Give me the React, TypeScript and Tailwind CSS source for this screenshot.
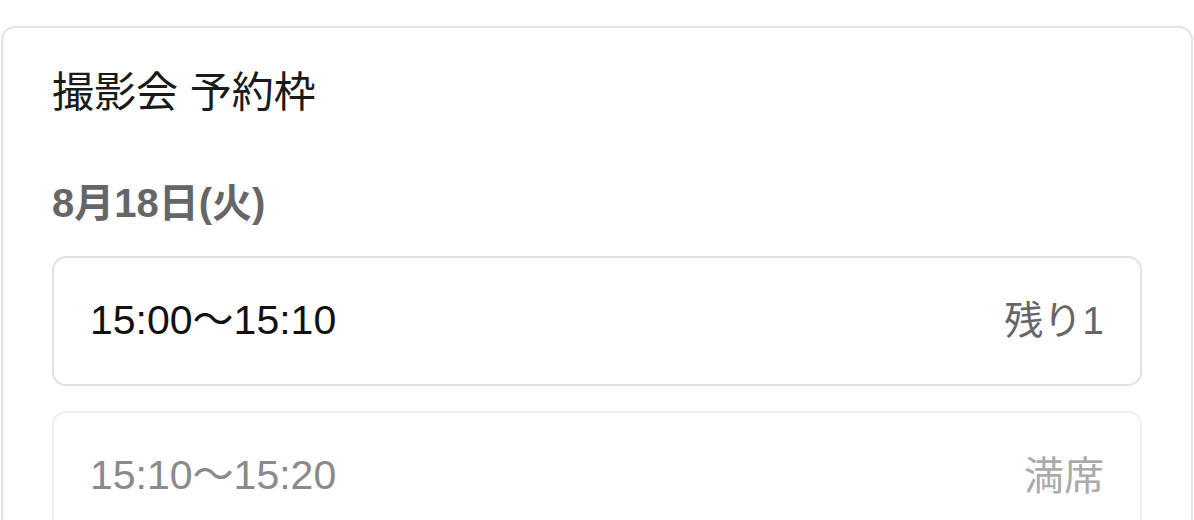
const slots = [
  { time: "15:00〜15:10", status: "残り1", full: false },
  { time: "15:10〜15:20", status: "満席", full: true },
];

export default function App() {
  return (
    <div
      className="min-h-screen bg-white pt-[26px] px-[1px]"
      style={{ fontFamily: '"Liberation Sans", "Noto Sans CJK JP", sans-serif' }}
    >
      <div className="w-[1192px] rounded-[14px] border-2 border-[#e4e4e4] bg-white px-[49px] pt-[35px] pb-10">
        <h1 className="text-[42px] leading-[60px] font-normal text-[#1a1a1a]">
          撮影会 予約枠
        </h1>
        <h2 className="mt-[50px] text-[40px] leading-[60px] font-bold text-[#666666]">
          8月18日(火)
        </h2>
        <div className="mt-[23px] flex flex-col gap-[25px]">
          {slots.map((slot) => (
            <div
              key={slot.time}
              className={
                slot.full
                  ? "flex h-[130px] items-center justify-between rounded-[14px] border-2 border-[#f0f0f0] px-[36px]"
                  : "flex h-[130px] items-center justify-between rounded-[14px] border-2 border-[#e2e2e2] px-[36px]"
              }
            >
              <span
                className={
                  slot.full
                    ? "text-[41px] text-[#8a8a8a]"
                    : "text-[41px] text-[#111111]"
                }
              >
                {slot.time}
              </span>
              <span
                className={
                  slot.full
                    ? "text-[40px] text-[#aaaaaa]"
                    : "text-[39px] text-[#666666]"
                }
              >
                {slot.status}
              </span>
            </div>
          ))}
        </div>
      </div>
    </div>
  );
}
